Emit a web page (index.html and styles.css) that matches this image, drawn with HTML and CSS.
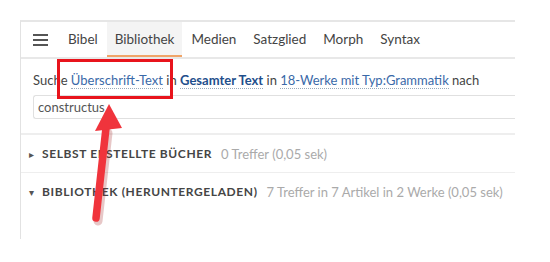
FILE: index.html
```html
<!DOCTYPE html>
<html lang="de">
<head>
  <meta charset="UTF-8">
  <title>Bibliothek Suche</title>
  <link rel="stylesheet" href="styles.css">
</head>
<body>
  <div class="panel">
    <div class="tabs">
      <span class="menu">
        <svg width="15" height="12" viewBox="0 0 15 12">
          <rect x="0" y="0" width="15" height="2" fill="#555"/>
          <rect x="0" y="5" width="15" height="2" fill="#555"/>
          <rect x="0" y="10" width="15" height="2" fill="#555"/>
        </svg>
      </span>
      <span class="tab">Bibel</span>
      <span class="tab active">Bibliothek</span>
      <span class="tab">Medien</span>
      <span class="tab">Satzglied</span>
      <span class="tab">Morph</span>
      <span class="tab">Syntax</span>
    </div>

    <div class="query">
      Suche <a class="opt">Überschrift-Text</a> in <a class="opt strong">Gesamter Text</a> in <a class="opt">18-Werke mit Typ:Grammatik</a> nach
    </div>
    <div class="search-box">constructus</div>

    <div class="section">
      <span class="caret">&#9656;</span>
      <span class="title">Selbst erstellte Bücher</span>
      <span class="hits">0 Treffer (0,05 sek)</span>
    </div>
    <div class="section open">
      <span class="caret">&#9662;</span>
      <span class="title">Bibliothek (heruntergeladen)</span>
      <span class="hits">7 Treffer in 7 Artikel in 2 Werke (0,05 sek)</span>
    </div>
  </div>

  <!-- annotation -->
  <div class="mark"></div>
  <svg class="arrow" width="60" height="130" viewBox="0 0 60 130">
    <path d="M28 28 L18 116" stroke="#a02020" stroke-opacity="0.25" stroke-width="9" stroke-linecap="round" transform="translate(1,2)"/>
    <path d="M27 25 L17 115" stroke="#f0343c" stroke-width="7.5" stroke-linecap="round"/>
    <polygon points="30,1 16,28 43,25" fill="#f0343c"/>
  </svg>
</body>
</html>
```

FILE: styles.css
```css
body {
  margin: 0;
  background: #ffffff;
  font-family: Lato, 'Noto Sans', sans-serif;
  color: #444;
}

.panel {
  margin: 20px 0 0 20px;
  width: 494px;
  height: 217px;
  border-left: 1px solid #e2e2e2;
  border-top: 2px solid #e6e6e6;
}

.tabs {
  display: flex;
  height: 35px;
  border-bottom: 2px solid #e8e8e8;
  font-size: 13.5px;
}

.menu {
  display: flex;
  align-items: center;
  padding: 0 12px 0 12px;
}

.tab {
  display: flex;
  align-items: center;
  padding: 0 8px 2px;
  margin-right: 1px;
  color: #444;
}

.tab.active {
  background: #f4f4f4;
  box-shadow: inset 0 -2px 0 #f0a468;
}

.query {
  padding: 13px 12px 0;
  height: 20px;
  font-size: 13px;
  color: #444;
  white-space: nowrap;
}

.opt {
  color: #3a69a8;
  border-bottom: 1px dotted #9ab;
}

.opt.strong {
  color: #1f4f8c;
  font-weight: bold;
}

.search-box {
  margin: 3px 0 14px 12px;
  height: 22px;
  line-height: 22px;
  padding-left: 4px;
  border: 1px solid #e0e0e0;
  border-right: none;
  border-radius: 3px 0 0 3px;
  font-size: 13px;
  color: #555;
}

.section {
  display: flex;
  align-items: center;
  height: 37px;
  border-top: 2px solid #eeeeee;
  padding-left: 8px;
  font-size: 12px;
  white-space: nowrap;
}

.section.open {
  border-top-width: 1px;
}

.caret {
  font-size: 10px;
  color: #555;
  width: 13px;
}

.title {
  text-transform: uppercase;
  letter-spacing: 0.6px;
  font-weight: bold;
  color: #454545;
  margin-right: 9px;
}

.hits {
  color: #aaa;
  font-size: 13px;
}

.mark {
  position: absolute;
  left: 57px;
  top: 59px;
  width: 110px;
  height: 34px;
  border: 3px solid #e8141c;
}

.arrow {
  position: absolute;
  left: 79px;
  top: 103px;
}
```
